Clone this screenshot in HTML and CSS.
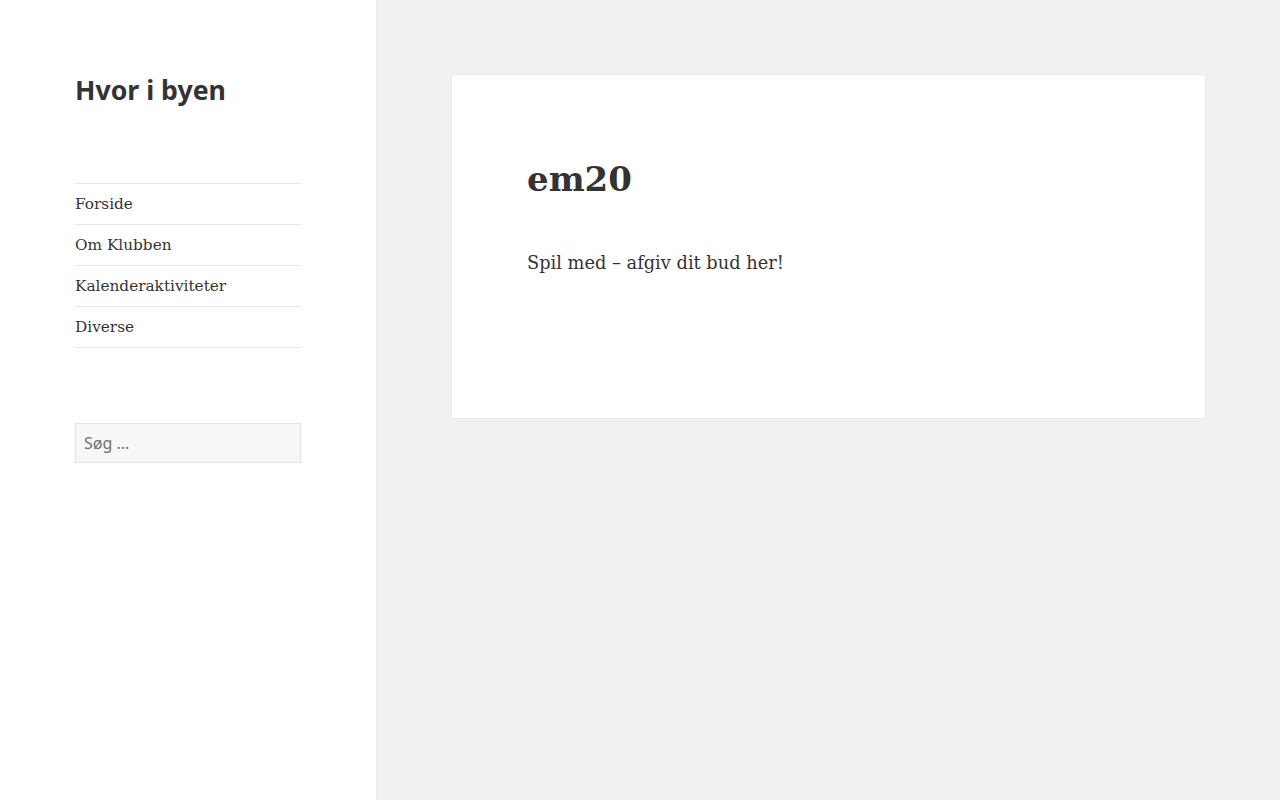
FILE: index.html
```html
<!DOCTYPE html>
<html lang="da">
<head>
    <meta charset="UTF-8">
    <meta name="viewport" content="width=device-width, initial-scale=1.0">
    <title>em20 – Hvor i byen</title>
    <link rel="stylesheet" href="styles.css">
</head>
<body>
    <div class="page">
        <aside class="sidebar">
            <header class="site-header">
                <p class="site-title"><a href="#">Hvor i byen</a></p>
            </header>
            <nav class="main-navigation">
                <ul>
                    <li><a href="#">Forside</a></li>
                    <li><a href="#">Om Klubben</a></li>
                    <li><a href="#">Kalenderaktiviteter</a></li>
                    <li><a href="#">Diverse</a></li>
                </ul>
            </nav>
            <form class="search-form" role="search">
                <input type="search" class="search-field" placeholder="Søg …" aria-label="Søg efter:">
            </form>
        </aside>

        <main class="site-main">
            <article class="page-card">
                <h1 class="entry-title">em20</h1>
                <div class="entry-content">
                    <p>Spil med – afgiv dit bud her!</p>
                </div>
            </article>
        </main>
    </div>
</body>
</html>
```

FILE: styles.css
```css
* {
    margin: 0;
    padding: 0;
    box-sizing: border-box;
}

body {
    font-family: 'DejaVu Serif', 'Liberation Serif', serif;
    color: #333;
    background: #f1f1f1;
    height: 100vh;
    overflow: hidden;
}

a {
    color: #333;
    text-decoration: none;
}

.page {
    display: flex;
    min-height: 100vh;
}

/* Sidebar */
.sidebar {
    width: 376px;
    flex-shrink: 0;
    background: #fff;
    box-shadow: 0 0 1px rgba(0, 0, 0, 0.15);
    padding: 73px 75px 0;
}

.site-title {
    font-family: 'Noto Sans', sans-serif;
    font-size: 26.7px;
    font-weight: 700;
    line-height: 1.3;
}

.main-navigation {
    margin-top: 75px;
}

.main-navigation ul {
    list-style: none;
    border-top: 1px solid #eaeaea;
}

.main-navigation li {
    border-bottom: 1px solid #eaeaea;
}

.main-navigation a {
    display: block;
    font-size: 15.3px;
    line-height: 40px;
}

.search-form {
    margin-top: 75px;
}

.search-field {
    width: 100%;
    height: 40px;
    padding: 0 8px;
    background: #f7f7f7;
    border: 1px solid #e3e3e3;
    border-radius: 0;
    font-family: 'Noto Sans', sans-serif;
    font-size: 16px;
    color: #333;
    outline: none;
}

.search-field::placeholder {
    color: #707070;
}

/* Main */
.site-main {
    flex: 1;
    padding: 75px 75px 0 76px;
}

.page-card {
    background: #fff;
    box-shadow: 0 0 1px rgba(0, 0, 0, 0.15);
    padding: 84px 75px 141px;
}

.entry-title {
    font-size: 34px;
    font-weight: 700;
    line-height: 1.2;
    margin-bottom: 49px;
}

.entry-content {
    font-size: 17.8px;
    line-height: 1.6;
}
```
